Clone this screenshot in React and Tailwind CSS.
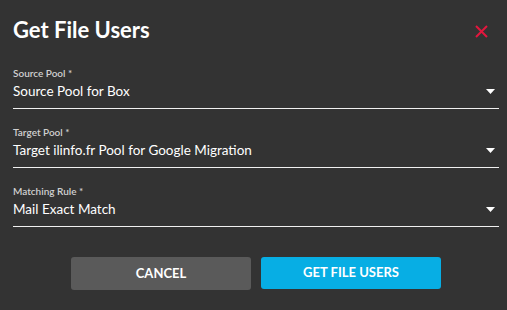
import React from "react";

function SelectField({ label, value }) {
  return (
    <div className="flex flex-col">
      <label className="text-[10px] leading-[12px] font-semibold text-[#d0d0d0]">{label}</label>
      <div className="mt-[4px] flex items-center justify-between border-b border-[#f0f0f0] pb-[8px]">
        <span className="text-[13.5px] leading-[17px] text-white">{value}</span>
        <svg width="9" height="5" viewBox="0 0 9 5" className="mr-[4px]">
          <path d="M0 0 L9 0 L4.5 5 Z" fill="#ffffff" />
        </svg>
      </div>
    </div>
  );
}

export default function App() {
  return (
    <div
      className="w-[507px] h-[310px] bg-[#333333] pl-[13px] pr-[8px] pt-[17px]"
      style={{ fontFamily: "Lato, 'Open Sans', sans-serif" }}
    >
      <div className="flex items-center justify-between">
        <h2 className="text-[22px] leading-[26px] font-bold text-white">Get File Users</h2>
        <button className="mr-[11px] mt-[2px]">
          <svg width="13" height="13" viewBox="0 0 13 13">
            <path d="M1 1 L12 12 M12 1 L1 12" stroke="#e3173e" strokeWidth="2" />
          </svg>
        </button>
      </div>

      <div className="mt-[24px] flex flex-col gap-[17px]">
        <SelectField label="Source Pool *" value="Source Pool for Box" />
        <SelectField label="Target Pool *" value="Target ilinfo.fr Pool for Google Migration" />
        <SelectField label="Matching Rule *" value="Mail Exact Match" />
      </div>

      <div className="mt-[30px] flex justify-center gap-[10px]">
        <button className="w-[180px] h-[33px] rounded-[3px] bg-[#5a5a5a] text-[13px] font-bold text-white">
          CANCEL
        </button>
        <button className="w-[180px] h-[32px] rounded-[3px] bg-[#07aee4] text-[13px] font-bold text-white">
          GET FILE USERS
        </button>
      </div>
    </div>
  );
}
